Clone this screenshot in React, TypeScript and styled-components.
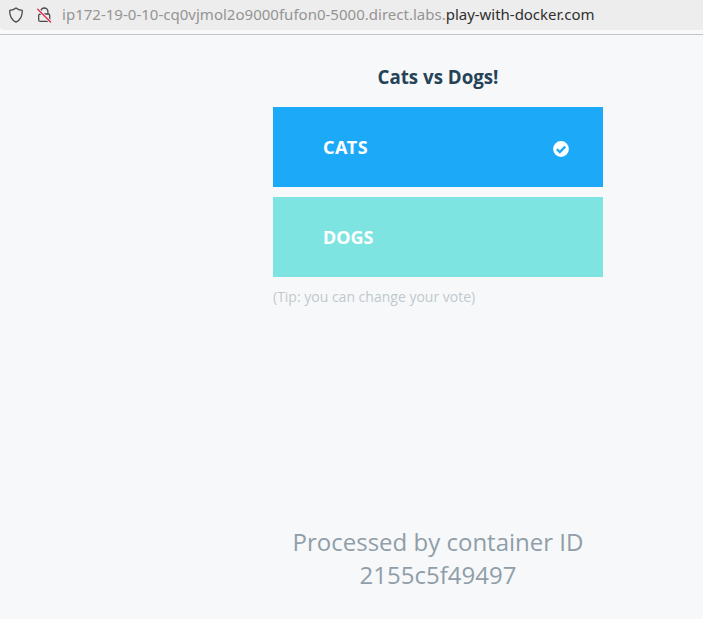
import React from 'react';
import styled, { createGlobalStyle } from 'styled-components';

const GlobalStyle = createGlobalStyle`
  * { box-sizing: border-box; }
  body { margin: 0; background: #f7f8f9; font-family: "Open Sans", sans-serif; overflow: hidden; }
`;

const Toolbar = styled.header`
  height: 35px;
  background: #f9f9f9;
  border-bottom: 1px solid #c4c4c4;
`;

const AddressBar = styled.div`
  height: 30px;
  display: flex;
  align-items: center;
  background: #ededed;
  border-bottom-left-radius: 4px;
  padding-left: 8px;
`;

const BarIcon = styled.svg`
  width: 16px;
  height: 16px;
  flex: none;
  margin: -1px 12px 0 0;
`;

const Address = styled.div`
  display: flex;
  margin: -2px 0 0 -2px;
  font: 400 15px/20px "Noto Sans", sans-serif;
  white-space: nowrap;
`;

const Subdomain = styled.span`
  color: #949494;
  letter-spacing: 0.015px;
`;

const Domain = styled.span`
  color: #303030;
  letter-spacing: -0.03px;
`;

const Content = styled.main`
  width: 330px;
  margin-left: 273px;
  height: 584px;
  display: flex;
  flex-direction: column;
`;

const Title = styled.h3`
  margin: 29px 0 17px;
  font-size: 18.72px;
  line-height: 26px;
  font-weight: 700;
  text-align: center;
  color: #254356;
`;

const VoteButton = styled.button<{ $color: string }>`
  display: flex;
  align-items: center;
  justify-content: space-between;
  width: 330px;
  height: 80px;
  flex: none;
  margin: 0 0 10px;
  padding: 0 34px 0 50px;
  border: 0;
  background: ${(p) => p.$color};
  color: #fff;
  text-align: left;
`;

const VoteLabel = styled.span<{ $tracking: string }>`
  margin-top: -1px;
  font: 700 18px/24px "Noto Sans", sans-serif;
  letter-spacing: ${(p) => p.$tracking};
`;

const CheckIcon = styled.svg`
  width: 16px;
  height: 16px;
  margin-top: 3px;
`;

const Tip = styled.div`
  font-size: 14px;
  line-height: 20px;
  color: #c0c9ce;
`;

const Hostname = styled.div`
  margin-top: 218px;
  font-size: 24px;
  line-height: 33px;
  text-align: center;
  color: #8f9ea8;
`;

export default function App() {
  return (
    <>
      <GlobalStyle />
      <Toolbar>
        <AddressBar>
          <BarIcon viewBox="0 0 16 16" fill="none" stroke="#4b4b4b" strokeWidth="1.3" strokeLinejoin="round">
            <path d="M8 .9C9.700 2.300 11.700 3 14.300 3.300c.2 5.600-1.800 9.700-6.300 11.900C3.500 13 1.500 8.900 1.700 3.300 4.300 3 6.300 2.300 8 .9Z" />
          </BarIcon>
          <BarIcon viewBox="0 0 16 16" fill="none" stroke="#4b4b4b" strokeWidth="1.3" strokeLinecap="round">
            <path d="M4.700 7V4.600a3.600 3.600 0 0 1 7.200 0V7" />
            <rect x="2.700" y="7" width="11" height="7.400" rx="1.500" />
            <path d="M1.700 2.200 14.600 15" stroke="#ededed" strokeWidth="3" />
            <path d="M1.700 2.200 14.600 15" stroke="#e22850" />
          </BarIcon>
          <Address>
            <Subdomain>ip172-19-0-10-cq0vjmol2o9000fufon0-5000.direct.labs.</Subdomain>
            <Domain>play-with-docker.com</Domain>
          </Address>
        </AddressBar>
      </Toolbar>
      <Content>
        <Title>Cats vs Dogs!</Title>
        <VoteButton $color="#1caaf8">
          <VoteLabel $tracking="0.55px">CATS</VoteLabel>
          <CheckIcon viewBox="0 0 16 16">
            <circle cx="8" cy="8" r="7.900" fill="#fff" />
            <path d="m3.900 8.100 2.900 2.900 5.400-5.400" fill="none" stroke="#1caaf8" strokeWidth="2.300" />
          </CheckIcon>
        </VoteButton>
        <VoteButton $color="#7ee4e2">
          <VoteLabel $tracking="0px">DOGS</VoteLabel>
        </VoteButton>
        <Tip>(Tip: you can change your vote)</Tip>
        <Hostname>
          Processed by container ID 2155c5f49497
        </Hostname>
      </Content>
    </>
  );
}
